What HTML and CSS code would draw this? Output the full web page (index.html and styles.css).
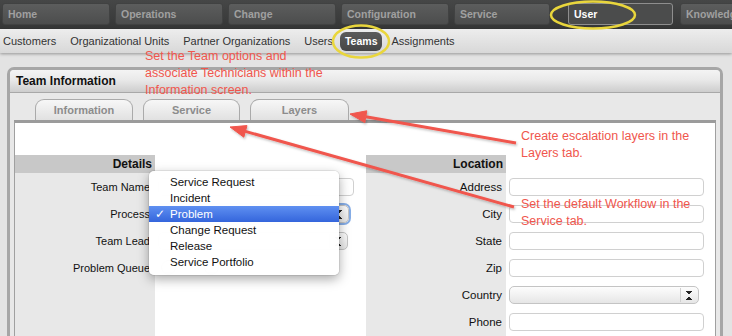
FILE: index.html
```html
<!DOCTYPE html>
<html lang="en">
<head>
    <meta charset="UTF-8">
    <title>Team Information</title>
    <link rel="stylesheet" href="styles.css">
</head>
<body>
<div class="page">
    <nav class="topnav">
        <span class="nav-btn">Home</span>
        <span class="nav-btn">Operations</span>
        <span class="nav-btn">Change</span>
        <span class="nav-btn">Configuration</span>
        <span class="nav-btn narrow">Service</span>
        <span class="nav-btn current">User</span>
        <span class="nav-btn last">Knowledge</span>
    </nav>

    <nav class="subnav">
        <span class="sub-item">Customers</span>
        <span class="sub-item">Organizational Units</span>
        <span class="sub-item">Partner Organizations</span>
        <span class="sub-item">Users</span>
        <span class="sub-item active">Teams</span>
        <span class="sub-item">Assignments</span>
    </nav>

    <div class="panel">
        <div class="panel-head">Team Information</div>
        <div class="tabs">
            <span class="tab tab-info">Information</span>
            <span class="tab tab-service">Service</span>
            <span class="tab tab-layers">Layers</span>
        </div>

        <div class="frame">
            <!-- details column -->
            <div class="section left">
                <div class="lbl head">Details</div><div class="fld"></div>
                <div class="lbl">Team Name</div><div class="fld"><span class="input w196"></span></div>
                <div class="lbl">Process</div><div class="fld"><span class="select focus w191"><span class="arrows"></span></span></div>
                <div class="lbl">Team Lead</div><div class="fld"><span class="select w190"><span class="arrows"></span></span></div>
                <div class="lbl">Problem Queue</div><div class="fld radios"><span class="radio"></span><span class="radio"></span></div>
                <div class="lbl"></div><div class="fld"></div>
                <div class="lbl"></div><div class="fld"></div>
            </div>

            <!-- location column -->
            <div class="section right">
                <div class="lbl head">Location</div><div class="fld"></div>
                <div class="lbl">Address</div><div class="fld"><span class="input w195"></span></div>
                <div class="lbl">City</div><div class="fld"><span class="input w195"></span></div>
                <div class="lbl">State</div><div class="fld"><span class="input w195"></span></div>
                <div class="lbl">Zip</div><div class="fld"><span class="input w195"></span></div>
                <div class="lbl">Country</div><div class="fld"><span class="select w190"><span class="arrows"></span></span></div>
                <div class="lbl">Phone</div><div class="fld"><span class="input w195"></span></div>
            </div>
        </div>
    </div>

    <!-- open process menu -->
    <ul class="menu">
        <li>Service Request</li>
        <li>Incident</li>
        <li class="sel"><span class="check">&#10003;</span>Problem</li>
        <li>Change Request</li>
        <li>Release</li>
        <li>Service Portfolio</li>
    </ul>

    <!-- callouts -->
    <div class="note note-info">Set the Team options and<br>associate Technicians within the<br>Information screen.</div>
    <div class="note note-layers">Create escalation layers in the<br>Layers tab.</div>
    <div class="note note-service">Set the default Workflow in the<br>Service tab.</div>

    <svg class="marks" width="732" height="336" viewBox="0 0 732 336">
        <defs>
            <filter id="shade" x="-10%" y="-10%" width="120%" height="120%">
                <feDropShadow dx="1" dy="1.5" stdDeviation="1" flood-color="#000" flood-opacity="0.25"/>
            </filter>
        </defs>
        <ellipse cx="593" cy="15" rx="42" ry="13.5" fill="none" stroke="#e9d63c" stroke-width="2.5"/>
        <ellipse cx="361" cy="41.5" rx="28" ry="16" fill="none" stroke="#e9d63c" stroke-width="2.5"/>
        <g filter="url(#shade)" fill="#f0564d" stroke="#f0564d">
            <line x1="516" y1="143" x2="365.8" y2="116.7" stroke-width="3"/>
            <polygon points="350,114 366.8,110.8 364.8,122.6" stroke-width="1"/>
            <line x1="514" y1="207" x2="245.4" y2="131.4" stroke-width="3"/>
            <polygon points="230,127 247,125.6 243.8,137.2" stroke-width="1"/>
        </g>
    </svg>
</div>
</body>
</html>
```

FILE: styles.css
```css
body {
    margin: 0;
    background-color: #e3e3e3;
    font-family: "Liberation Sans", Arial, sans-serif;
}
.page {
    position: relative;
    width: 732px;
    height: 336px;
    overflow: hidden;
}

/* top navigation */
.topnav {
    display: flex;
    gap: 5px;
    height: 29px;
    box-sizing: border-box;
    padding: 3px 0 0 2px;
    background: linear-gradient(#464747, #353636);
}
.nav-btn {
    flex: none;
    width: 108px;
    height: 22px;
    box-sizing: border-box;
    padding-left: 5px;
    line-height: 21px;
    border: 1px solid #414242;
    border-radius: 3px;
    background: linear-gradient(#5c5d5d, #4c4d4d);
    color: #a0a0a0;
    font-size: 10.5px;
    font-weight: bold;
}
.nav-btn.narrow {
    width: 96px;
}
.nav-btn.current {
    width: 105px;
    margin-left: 13px;
    background: #4b4c4c;
    border-color: #8e8e8e;
    color: #fff;
}
.nav-btn.last {
    margin-left: 2px;
}

/* second level navigation */
.subnav {
    display: flex;
    align-items: center;
    gap: 14px;
    height: 24px;
    padding-left: 3px;
    background: linear-gradient(#ededed, #d8d8d8);
    box-shadow: 0 1px 3px rgba(0, 0, 0, 0.35);
    position: relative;
}
.sub-item {
    font-size: 11px;
    color: #333;
}
.sub-item.active {
    margin: 0 -5px 0 -7px;
    padding: 0 5px;
    height: 19px;
    line-height: 19px;
    border-radius: 6px;
    background: linear-gradient(#5b5b5b, #464646);
    color: #fff;
    font-size: 10.5px;
    font-weight: bold;
}

/* panel */
.panel {
    margin: 14px 9px 0 7px;
    border: 3px solid #a6a6a6;
    border-bottom: none;
    border-radius: 7px 7px 0 0;
    background-color: #e8e8e8;
}
.panel-head {
    height: 22px;
    line-height: 22px;
    padding-left: 6px;
    border-bottom: 1px solid #a8a8a8;
    border-radius: 4px 4px 0 0;
    background: linear-gradient(#f4f4f4, #e9e9e9 45%, #cdcdcd);
    font-size: 12px;
    font-weight: bold;
    color: #111;
}
.tabs {
    display: flex;
    gap: 10px;
    padding: 6px 0 0 25px;
}
.tab {
    height: 21px;
    box-sizing: border-box;
    line-height: 20px;
    text-align: center;
    border: 1px solid #aaa;
    border-bottom: none;
    border-radius: 9px 9px 0 0;
    background: linear-gradient(#f7f7f7, #e1e1e1);
    color: #8c8c8c;
    font-size: 11px;
    font-weight: bold;
}
.tab-info { width: 98px; }
.tab-service { width: 97px; }
.tab-layers { width: 99px; }

.frame {
    display: flex;
    margin: 0 4px;
    padding-top: 32px;
    height: 300px;
    border-top: 3px solid #9b9b9b;
    border-left: 1px solid #a0a0a0;
    border-right: 1px solid #a0a0a0;
    background-color: #fff;
}
.section {
    display: grid;
    grid-template-columns: 140px 200px;
    grid-template-rows: 18px;
    grid-auto-rows: 27px;
    align-items: center;
    background: linear-gradient(to right, #e8e8e8 140px, transparent 140px);
}
.section.right {
    margin-left: 11px;
    grid-template-columns: 140px 1fr;
    flex: 1;
}
.lbl {
    text-align: right;
    padding-right: 4px;
    font-size: 11.5px;
    color: #111;
}
.section.left .lbl {
    padding-right: 5px;
    font-size: 11px;
}
.lbl.head,
.section.left .lbl.head {
    align-self: stretch;
    padding-right: 3px;
    line-height: 18px;
    background-color: #c8c8c8;
    font-size: 12px;
    font-weight: bold;
}
.fld {
    padding-left: 3px;
}

/* form controls */
.input, .select {
    display: block;
    height: 18px;
    box-sizing: border-box;
    border-radius: 4px;
}
.input {
    border: 1px solid #d0d0d0;
    background-color: #fff;
}
.select {
    position: relative;
    border: 1px solid #c4c4c4;
    border-radius: 5px;
    background: linear-gradient(#fdfdfd, #e6e6e6);
}
.select.focus {
    box-shadow: 0 0 0 2px #86ade6;
}
.arrows {
    position: absolute;
    right: 0;
    top: 1px;
    bottom: 1px;
    width: 17px;
    border-left: 1px solid #d0d0d0;
    background:
        linear-gradient(to top right, transparent 50%, #222 50%) 5px 3px / 3px 4px no-repeat,
        linear-gradient(to top left, transparent 50%, #222 50%) 8px 3px / 3px 4px no-repeat,
        linear-gradient(to bottom right, transparent 50%, #222 50%) 5px 8px / 3px 4px no-repeat,
        linear-gradient(to bottom left, transparent 50%, #222 50%) 8px 8px / 3px 4px no-repeat;
}
.w196 { width: 196px; }
.w195 { width: 195px; }
.w191 { width: 191px; }
.w190 { width: 190px; }

.radios {
    display: flex;
    gap: 28px;
    padding-left: 6px;
}
.radio {
    width: 13px;
    height: 13px;
    border-radius: 50%;
    border: 1px solid #888;
    background: linear-gradient(#fff, #ccc);
}

/* dropdown list of the process select */
.menu {
    position: absolute;
    left: 149px;
    top: 171px;
    width: 190px;
    height: 104px;
    box-sizing: border-box;
    margin: 0;
    padding: 3px 0 0;
    list-style: none;
    background-color: rgba(255, 255, 255, 0.98);
    border-radius: 5px;
    box-shadow: 0 4px 12px rgba(0, 0, 0, 0.35), 0 0 0 1px rgba(0, 0, 0, 0.07);
    font-size: 11.5px;
    color: #111;
}
.menu li {
    position: relative;
    height: 16px;
    line-height: 16px;
    padding-left: 21px;
}
.menu li.sel {
    background: linear-gradient(#5f90f1, #3465dc);
    color: #fff;
}
.check {
    position: absolute;
    left: 6px;
    top: 0;
    font-family: "DejaVu Sans", sans-serif;
    font-size: 12px;
    font-weight: bold;
}

/* annotations */
.note {
    position: absolute;
    color: #f0564d;
    font-size: 12.5px;
    line-height: 17px;
    white-space: nowrap;
}
.note-info {
    left: 145px;
    top: 48px;
}
.note-layers {
    left: 521px;
    top: 128px;
}
.note-service {
    left: 521px;
    top: 196px;
}
.marks {
    position: absolute;
    left: 0;
    top: 0;
    pointer-events: none;
}
```
